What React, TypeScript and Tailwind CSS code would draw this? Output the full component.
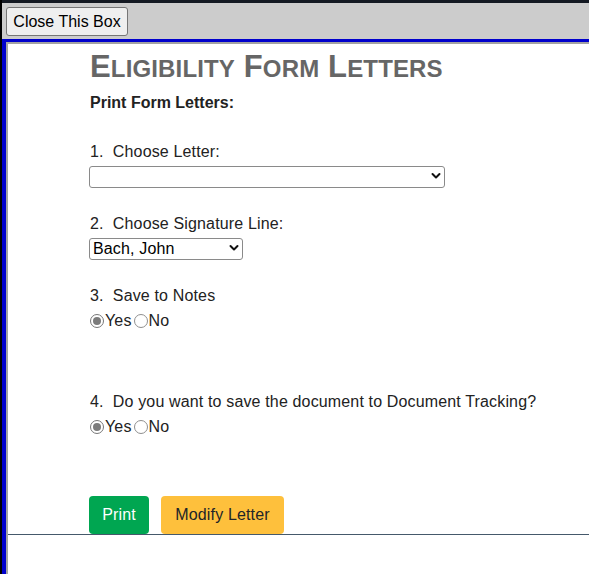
import React from "react";

function Chevron() {
  return (
    <svg width="10" height="7" viewBox="0 0 10 7" className="pointer-events-none absolute right-[4px] top-1/2 -translate-y-1/2">
      <polyline points="1.5,1.5 5,5 8.5,1.5" fill="none" stroke="#111" strokeWidth="2" strokeLinecap="round" strokeLinejoin="round" />
    </svg>
  );
}

function FakeSelect({ widthClass, value }: { widthClass: string; value?: string }) {
  return (
    <div className={`relative mt-[4px] h-[22px] ${widthClass}`}>
      <select
        defaultValue={value ?? ""}
        className="h-full w-full appearance-none rounded-[3px] border border-[#8a8a8a] bg-white pl-[3px] pr-6 text-[16px] leading-[20px] text-black"
      >
        <option value="">{value ?? ""}</option>
        {value && <option value={value}>{value}</option>}
      </select>
      <Chevron />
    </div>
  );
}

function Radio({ checked, label }: { checked?: boolean; label: string }) {
  return (
    <label className="flex items-center">
      <span
        className={`mr-[1px] grid h-[14px] w-[14px] place-items-center rounded-full border bg-white ${
          checked ? "border-[#777777]" : "border-[#8f8f8f]"
        }`}
      >
        {checked && <span className="h-[8px] w-[8px] rounded-full bg-[#7b7b7b]" />}
      </span>
      <span className="mr-[2px]">{label}</span>
    </label>
  );
}

function YesNo() {
  return (
    <div className="mt-[7px] flex h-[18px] items-center pl-px leading-[18px]">
      <Radio checked label="Yes" />
      <Radio label="No" />
    </div>
  );
}

function Word({ first, rest }: { first: string; rest: string }) {
  return (
    <span>
      {first}
      <span className="text-[24px] leading-none">{rest}</span>
    </span>
  );
}

export default function App() {
  return (
    <div className="flex min-h-screen flex-col border-l-2 border-black bg-white font-['Liberation_Sans',Arial,sans-serif] text-[16px] tracking-[0.15px] text-[#222]">
      <div className="h-[3px] bg-[#141922]" />
      <div className="h-[36px] bg-[#cccccc] pl-[4px] pt-[4px]">
        <button className="h-[29px] w-[122px] rounded-[3px] border border-[#767676] bg-[#efefef] text-[16px] leading-[18px] tracking-normal text-black">
          Close This Box
        </button>
      </div>
      <div className="flex flex-1 flex-col border-l-4 border-t-[3px] border-[#0000cc]">
        <div className="flex-1 border-l-2 border-t-2 border-[#a3a3a3] bg-white">
          <div className="border-b border-[#45596b] pl-[81px] pt-[5px]">
            <h1 className="h-[36px] pl-px text-[31px] font-bold leading-[36px] tracking-[0.15px] text-[#666666]">
              <Word first="E" rest="LIGIBILITY" /> <Word first="F" rest="ORM" /> <Word first="L" rest="ETTERS" />
            </h1>
            <p className="mt-[9px] pl-px font-bold leading-[18px] tracking-normal">Print Form Letters:</p>

            <p className="mt-[31px] pl-px leading-[18px]">1.&nbsp; Choose Letter:</p>
            <FakeSelect widthClass="w-[356px]" />

            <p className="mt-[28px] pl-px leading-[18px]">2.&nbsp; Choose Signature Line:</p>
            <FakeSelect widthClass="w-[154px]" value="Bach, John" />

            <p className="mt-[28px] pl-px leading-[18px]">3.&nbsp; Save to Notes</p>
            <YesNo />

            <p className="mt-[63px] pl-px leading-[18px]">4.&nbsp; Do you want to save the document to Document Tracking?</p>
            <YesNo />

            <div className="mt-[60px] flex gap-[12px]">
              <button className="h-[38px] w-[60px] rounded-[4px] bg-[#00a651] text-[16px] text-white">Print</button>
              <button className="h-[38px] w-[123px] rounded-[4px] bg-[#fec03c] text-[16px] text-[#212529]">Modify Letter</button>
            </div>
          </div>
        </div>
      </div>
    </div>
  );
}
